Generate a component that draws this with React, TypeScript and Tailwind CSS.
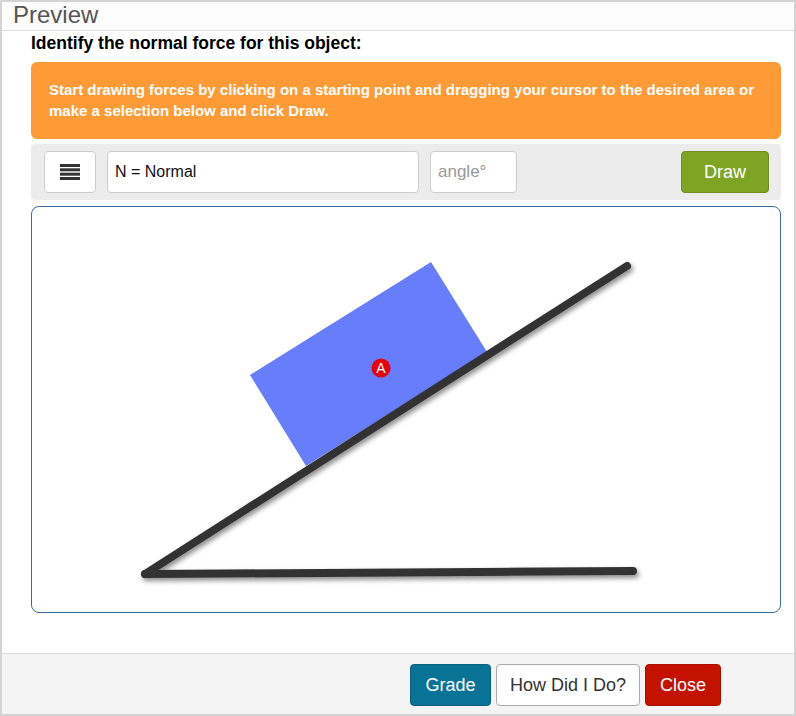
import React from 'react';

function MenuIcon() {
  return (
    <svg width="20" height="16" viewBox="0 0 20 16">
      <rect x="0" y="0" width="20" height="3" fill="#333" />
      <rect x="0" y="4.3" width="20" height="3" fill="#333" />
      <rect x="0" y="8.7" width="20" height="3" fill="#333" />
      <rect x="0" y="13" width="20" height="3" fill="#333" />
    </svg>
  );
}

function Incline() {
  return (
    <svg width="748" height="405" viewBox="0 0 748 405" className="block">
      <defs>
        <filter id="sh" x="-10%" y="-10%" width="120%" height="130%">
          <feDropShadow dx="2" dy="3" stdDeviation="2.5" floodColor="#000" floodOpacity="0.45" />
        </filter>
      </defs>
      <polygon points="218,168 399,55 455,145 274,259" fill="#677dfb" />
      <g filter="url(#sh)" stroke="#333" strokeWidth="8" strokeLinecap="round" fill="none">
        <line x1="113" y1="367" x2="595" y2="59" />
        <line x1="113" y1="367" x2="601" y2="364" />
      </g>
      <circle cx="349" cy="161" r="9.5" fill="#e6000a" />
      <text
        x="349"
        y="166"
        textAnchor="middle"
        fontSize="14"
        fill="#fff"
        fontFamily="'Liberation Sans', Arial, sans-serif"
      >
        A
      </text>
    </svg>
  );
}

export default function App() {
  return (
    <div className="w-[796px] h-[716px] border-2 border-[#d4d4d4] flex flex-col bg-white font-['Liberation_Sans',Arial,sans-serif]">
      {/* Header */}
      <div className="h-[29px] bg-[#fcfcfc] border-b border-[#dddddd] pl-[11px] text-[24px] leading-[26px] text-[#555]">
        Preview
      </div>

      {/* Body */}
      <div className="flex-1 pl-[29px] pr-[13px]">
        <div className="pt-[2px] mb-[9px] text-[17.5px] leading-[20px] font-bold text-black">
          Identify the normal force for this object:
        </div>

        <div className="bg-[#fe9b36] rounded-[6px] pl-[18px] pr-[18px] pt-[17px] pb-[18px] text-white font-bold text-[15px] leading-[21px]">
          Start drawing forces by clicking on a starting point and dragging your cursor to the desired area or
          <br />
          make a selection below and click Draw.
        </div>

        <div className="mt-[5px] h-[56px] bg-[#ececec] rounded-[4px] flex items-center pl-[13px] pr-[12px]">
          <button className="w-[52px] h-[42px] bg-white border border-[#cccccc] rounded-[4px] flex items-center justify-center">
            <MenuIcon />
          </button>
          <div className="ml-[11px] w-[312px] h-[42px] bg-white border border-[#cccccc] rounded-[4px] flex items-center pl-[7px] text-[16px] text-[#111]">
            N = Normal
          </div>
          <div className="ml-[11px] w-[87px] h-[42px] bg-white border border-[#cccccc] rounded-[4px] flex items-center pl-[7px] text-[17px] text-[#999]">
            angle°
          </div>
          <div className="flex-1" />
          <button className="w-[88px] h-[42px] bg-[#7fa424] border border-[#6f9020] rounded-[4px] text-white text-[18px]">
            Draw
          </button>
        </div>

        <div className="mt-[6px] h-[407px] border border-[#3a6aa5] rounded-[8px] overflow-hidden">
          <Incline />
        </div>
      </div>

      {/* Footer */}
      <div className="h-[61px] bg-[#f4f4f4] border-t border-[#dddddd] flex justify-end items-start pt-[10px] pr-[73px] gap-[5px]">
        <button className="w-[81px] h-[42px] bg-[#087394] border border-[#06617d] rounded-[4px] text-white text-[18px]">
          Grade
        </button>
        <button className="w-[144px] h-[42px] bg-white border border-[#aaaaaa] rounded-[4px] text-[#333] text-[18px]">
          How Did I Do?
        </button>
        <button className="w-[76px] h-[42px] bg-[#c41200] border border-[#a80f00] rounded-[4px] text-white text-[18px]">
          Close
        </button>
      </div>
    </div>
  );
}
